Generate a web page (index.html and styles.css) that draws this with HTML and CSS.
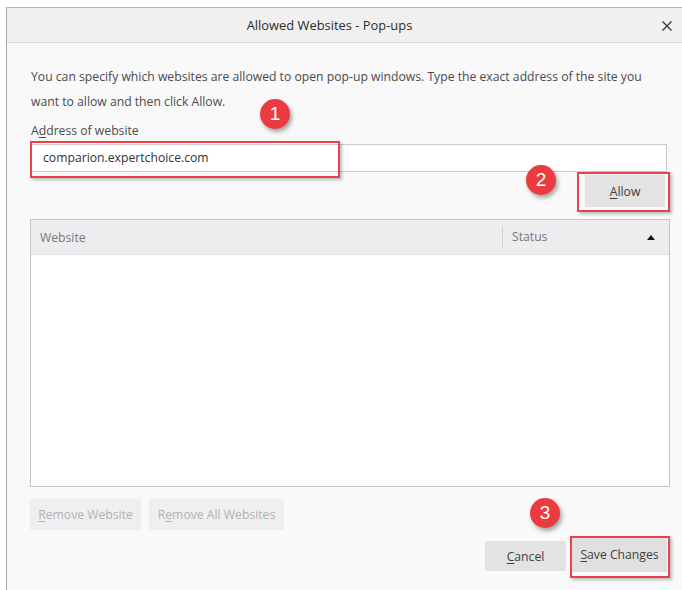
FILE: index.html
```html
<!DOCTYPE html>
<html lang="en">
<head>
<meta charset="utf-8">
<title>Allowed Websites - Pop-ups</title>
<link rel="stylesheet" href="styles.css">
</head>
<body>
<div class="window">
  <div class="titlebar">
    <span class="title">Allowed Websites - Pop-ups</span>
    <svg class="close" width="12" height="12" viewBox="0 0 12 12"><path d="M1.5 1.5 L10.5 10.5 M10.5 1.5 L1.5 10.5" stroke="#3a3a3a" stroke-width="1.4" fill="none"/></svg>
  </div>
  <div class="content">
    <p class="intro">You can specify which websites are allowed to open pop-up windows. Type the exact address of the site you<br>want to allow and then click Allow.</p>
    <label class="field-label">A<u>d</u>dress of website</label>
    <div class="field">
      <div class="input">comparion.expertchoice.com</div>
      <span class="mark mark-input"></span>
      <span class="badge badge-1">1</span>
    </div>
    <div class="allow-row">
      <div class="btn-wrap">
        <button class="btn btn-allow"><u>A</u>llow</button>
        <span class="mark mark-allow"></span>
        <span class="badge badge-2">2</span>
      </div>
    </div>
    <div class="table">
      <div class="thead">
        <div class="th th-site">Website</div>
        <div class="th th-status">Status <span class="sort"></span></div>
      </div>
      <div class="tbody"></div>
    </div>
    <div class="remove-row">
      <button class="btn btn-disabled"><u>R</u>emove Website</button>
      <button class="btn btn-disabled">R<u>e</u>move All Websites</button>
    </div>
    <div class="footer">
      <button class="btn btn-cancel"><u>C</u>ancel</button>
      <div class="btn-wrap">
        <button class="btn btn-save"><u>S</u>ave Changes</button>
        <span class="mark mark-save"></span>
        <span class="badge badge-3">3</span>
      </div>
    </div>
  </div>
</div>
</body>
</html>
```
FILE: styles.css
```css
html, body {
  margin: 0;
  padding: 0;
  background: #ffffff;
}

body {
  font-family: "Open Sans", "Noto Sans", sans-serif;
  font-size: 12.2px;
  color: #4a4a4f;
  overflow: hidden;
}

.window {
  margin: 7px 0 0 6px;
  height: 583px;
  border-top: 1px solid #b4b4b4;
  border-left: 1px solid #a8a8a8;
  background: #f9f9f9;
  display: flex;
  flex-direction: column;
}

.titlebar {
  height: 34px;
  flex: none;
  background: #f0f0f0;
  border-bottom: 1px solid #dadada;
  display: flex;
  align-items: center;
  justify-content: center;
  position: relative;
}

.title {
  color: #2b2b2b;
  font-size: 12.9px;
  margin-left: -30px;
}

.close {
  position: absolute;
  right: 9px;
  top: 12px;
}

.content {
  padding: 21px 15px 0 24px;
  display: flex;
  flex-direction: column;
}

.intro {
  margin: 0;
  line-height: 25px;
}

.field-label {
  line-height: 25px;
  margin-top: 4px;
}

u {
  text-decoration-thickness: 1px;
  text-underline-offset: 2px;
}

.field {
  position: relative;
  margin-top: 1px;
}

.input {
  height: 26px;
  line-height: 26px;
  border: 1px solid #c9c9c9;
  background: #ffffff;
  padding-left: 11px;
  color: #333;
}

.mark {
  position: absolute;
  border: 2px solid #e8434a;
  box-shadow: 2px 2px 3px rgba(0, 0, 0, 0.25);
  pointer-events: none;
}

.mark-input {
  left: -1px;
  top: -3px;
  width: 306px;
  height: 33px;
}

.badge {
  position: absolute;
  width: 30px;
  height: 30px;
  border-radius: 50%;
  background: #ec3b40;
  color: #fff;
  font-family: "Liberation Sans", Arial, sans-serif;
  font-size: 19px;
  line-height: 30px;
  text-align: center;
  box-shadow: 2px 3px 4px rgba(0, 0, 0, 0.35);
}

.badge-1 {
  left: 229px;
  top: -45px;
}

.allow-row {
  display: flex;
  justify-content: flex-end;
  margin-top: 3px;
  padding-right: 2px;
}

.btn-wrap {
  position: relative;
}

.btn {
  font-family: inherit;
  font-size: 12.2px;
  border: none;
  margin: 0;
  padding: 0;
  height: 31px;
  background: #e3e3e3;
  color: #404040;
}

.btn-allow {
  width: 80px;
  height: 32px;
}

.mark-allow {
  left: -8px;
  top: -3px;
  width: 89px;
  height: 36px;
}

.badge-2 {
  left: -59px;
  top: -10px;
}

.table {
  margin-top: 12px;
  margin-right: -3px;
  margin-left: -1px;
  height: 266px;
  border: 1px solid #c4c4c4;
  background: #ffffff;
  display: flex;
  flex-direction: column;
}

.thead {
  height: 34px;
  flex: none;
  background: #ededf0;
  border-bottom: 1px solid #e0e0e3;
  display: flex;
  align-items: center;
  color: #777;
}

.th-site {
  flex: 1;
  padding-left: 9px;
}

.th-status {
  width: 167px;
  height: 22px;
  line-height: 22px;
  border-left: 1px solid #d4d4d8;
  padding-left: 9px;
  display: flex;
  align-items: center;
  justify-content: space-between;
  box-sizing: border-box;
  padding-right: 14px;
}

.sort {
  width: 0;
  height: 0;
  border-left: 4px solid transparent;
  border-right: 4px solid transparent;
  border-bottom: 5px solid #111;
}

.remove-row {
  display: flex;
  gap: 8px;
  margin-top: 12px;
  margin-left: -1px;
}

.btn-disabled {
  background: #efefef;
  color: #b2b2b2;
  padding: 0 8px;
}

.btn-disabled:first-child {
  width: 111px;
}

.btn-disabled:last-child {
  width: 135px;
}

.footer {
  display: flex;
  justify-content: flex-end;
  gap: 6px;
  margin-top: 11px;
  padding-right: 0;
}

.btn-cancel {
  width: 81px;
  height: 30px;
  margin-top: 0;
}

.btn-save {
  width: 95px;
  height: 35px;
  margin-top: -4px;
  background: #e0e0e0;
}

.mark-save {
  left: -2px;
  top: -5px;
  width: 96px;
  height: 38px;
}

.badge-3 {
  left: -42px;
  top: -43px;
}
```
